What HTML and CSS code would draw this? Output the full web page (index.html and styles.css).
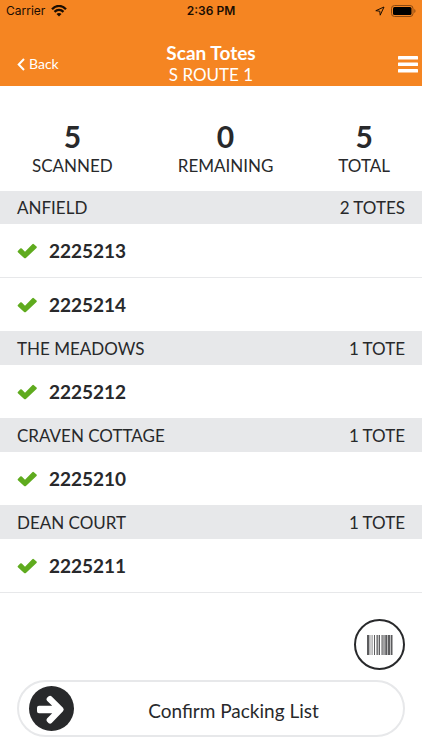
FILE: index.html
```html
<!DOCTYPE html>
<html lang="en">
<head>
<meta charset="utf-8">
<meta name="viewport" content="width=device-width, initial-scale=1">
<title>Scan Totes</title>
<link rel="stylesheet" href="styles.css">
</head>
<body>
<header class="top">
  <div class="status">
    <div class="status-side">
      <span>Carrier</span>
      <svg width="16" height="12" viewBox="0 0 16 12" fill="none" stroke="#1a0d02" stroke-width="2.200" aria-hidden="true"><path d="M1 4.200C5-.2 11-.2 15 4.200M3.500 6.900c2.600-2.600 6.400-2.600 9 0"/><path d="M8 11.500 5.500 9c1.400-1.300 3.600-1.300 5 0z" fill="#1a0d02" stroke="none"/></svg>
    </div>
    <span class="clock">2:36 PM</span>
    <div class="status-side status-right">
      <svg width="10" height="10" viewBox="0 0 10 10" fill="none" stroke="#1a0d02" stroke-linejoin="round" aria-hidden="true"><path d="M9 1 .8 4.700 4.800 5.200 5.200 9.200z"/></svg>
      <svg width="25" height="12" viewBox="0 0 25 12" aria-hidden="true"><rect x=".5" y=".5" width="21.500" height="11" rx="3" fill="none" stroke="#8d4a12"/><rect x="2" y="2" width="18.500" height="8" rx="1.500"/><path d="M23.300 4c1.600.7 1.600 3.300 0 4z" fill="#8d4a12"/></svg>
    </div>
  </div>
  <nav class="nav">
    <a class="back" href="#"><svg width="8" height="13" viewBox="0 0 8 13" fill="none" stroke="#fff" stroke-width="2" aria-hidden="true"><path d="M7 1 1.700 6.500 7 12"/></svg>Back</a>
    <div class="heading">
      <h1>Scan Totes</h1>
      <p>S ROUTE 1</p>
    </div>
    <button class="menu" type="button" aria-label="Menu"><svg width="20" height="17" viewBox="0 0 20 17" fill="#fff" aria-hidden="true"><rect width="20" height="3.500" rx=".6"/><rect y="6.500" width="20" height="3.500" rx=".6"/><rect y="13" width="20" height="3.500" rx=".6"/></svg></button>
  </nav>
</header>
<main>
  <dl class="stats">
    <div><dd>5</dd><dt>SCANNED</dt></div>
    <div><dd>0</dd><dt>REMAINING</dt></div>
    <div><dd>5</dd><dt>TOTAL</dt></div>
  </dl>
  <svg class="defs" width="0" height="0" aria-hidden="true"><symbol id="check" viewBox="0 0 20 16"><path d="M.9 7.900 3.200 5.600Q4 4.900 4.800 5.600L8 8.800 15.300 1.200Q16.100.5 16.900 1.200L19.500 3.600Q20.200 4.300 19.500 5L8.900 15Q8 15.700 7.100 15L.9 9.300Q.3 8.600.9 7.900Z" fill="#5fab1e"/></symbol></svg>
  <section class="group">
    <h2><span>ANFIELD</span><span>2 TOTES</span></h2>
    <ul>
      <li><svg class="check"><use href="#check"/></svg>2225213</li>
      <li><svg class="check"><use href="#check"/></svg>2225214</li>
    </ul>
  </section>
  <section class="group">
    <h2><span>THE MEADOWS</span><span>1 TOTE</span></h2>
    <ul><li><svg class="check"><use href="#check"/></svg>2225212</li></ul>
  </section>
  <section class="group">
    <h2><span>CRAVEN COTTAGE</span><span>1 TOTE</span></h2>
    <ul><li><svg class="check"><use href="#check"/></svg>2225210</li></ul>
  </section>
  <section class="group">
    <h2><span>DEAN COURT</span><span>1 TOTE</span></h2>
    <ul><li><svg class="check"><use href="#check"/></svg>2225211</li></ul>
  </section>
</main>
<footer class="actions">
  <button class="scan" type="button" aria-label="Scan barcode"><svg width="26" height="20" viewBox="0 0 26 20" aria-hidden="true"><g fill="#5c5c5e"><path d="M0 0h2v20H0zM7 0h1v20H7zM9.500 0h1.300v20H9.500zM12 0h1v20h-1zM14.500 0h1.200v20h-1.200zM16.500 0h1v20h-1zM18.200 0h2v20h-2zM21 0h2v20h-2zM24 0h1.500v20H24z"/></g><g fill="#98989a"><path d="M2 0h.7v20H2zM3.500 0h1v20h-1zM5.300 0h.7v20h-.7zM11 0h.6v20H11zM15.700 0h.8v20h-.8zM17.500 0h.7v20h-.7zM20.200 0h.5v20h-.5zM23 0h.6v20H23z"/></g></svg></button>
  <button class="confirm" type="button">
    <svg width="45" height="45" viewBox="0 0 45 45" aria-hidden="true"><circle cx="22.500" cy="22.500" r="22.500" fill="#28292b"/><path d="M10 19.800H23.200L18 14.800Q16.800 13.300 18 11.800L19.700 10.200Q21.200 9.200 22.700 10.400L34 21.800Q35.500 23.500 34 25.200L22.700 37Q21.200 38.200 19.700 37.200L18 35.500Q16.800 34 18 32.500L23.200 27.300H10Q8 27.300 8 25.300V21.800Q8 19.800 10 19.800Z" fill="#fff"/></svg>
    <span>Confirm Packing List</span>
  </button>
</footer>
</body>
</html>
```
FILE: styles.css
```css
* {
  box-sizing: border-box;
}

body {
  margin: 0;
  min-height: 100vh;
  display: flex;
  flex-direction: column;
  background: #fff;
  color: #28292b;
  font-family: Lato, "Liberation Sans", sans-serif;
}

h1, h2, p, dl, dd, ul {
  margin: 0;
  padding: 0;
}

button {
  font: inherit;
  color: inherit;
  background: none;
  border: 0;
  padding: 0;
}

svg {
  display: block;
  flex: none;
}

.top {
  background: #f58522;
}

.status {
  display: grid;
  grid-template-columns: 1fr auto 1fr;
  align-items: center;
  height: 22px;
  padding: 0 6px;
  color: #1a0d02;
  font: 12px/16px Inter, sans-serif;
}

.status-side {
  display: flex;
  align-items: center;
  gap: 6px;
}

.status-right {
  justify-content: flex-end;
}

.clock {
  font-weight: 600;
}

.nav {
  display: grid;
  grid-template-columns: 1fr auto 1fr;
  align-items: center;
  height: 64px;
  padding: 20px 4px 0;
  color: #fff;
}

.back {
  display: flex;
  align-items: center;
  gap: 4px;
  padding-left: 13px;
  color: inherit;
  font-size: 14px;
  line-height: 20px;
  text-decoration: none;
}

.heading {
  text-align: center;
}

.heading h1 {
  font-size: 19px;
  line-height: 22px;
}

.heading p {
  font-size: 17px;
  line-height: 22px;
}

.menu {
  justify-self: end;
}

.stats {
  display: flex;
  justify-content: space-between;
  padding: 32px 32px 14px;
  text-align: center;
}

.stats div {
  display: flex;
  flex-direction: column;
}

.stats dd {
  font-size: 30px;
  line-height: 36px;
  font-weight: 700;
}

.stats dt {
  font-size: 17px;
  line-height: 23px;
}

.defs {
  position: absolute;
}

.group + .group {
  border-top: 1px solid #e7e8ea;
}

.group h2 {
  display: flex;
  justify-content: space-between;
  padding: 0 17px;
  background: #e7e8ea;
  font-size: 17px;
  line-height: 33px;
  font-weight: 400;
}

.group ul {
  list-style: none;
}

.group li {
  display: flex;
  align-items: center;
  gap: 12px;
  height: 53px;
  padding: 0 17px;
  font-size: 19px;
  font-weight: 700;
}

.group li + li {
  height: 54px;
  border-top: 1px solid #e7e8ea;
}

.group:last-child {
  border-bottom: 1px solid #e7e8ea;
}

.check {
  width: 20px;
  height: 16px;
}

.actions {
  display: flex;
  flex-direction: column;
  gap: 10px;
  margin-top: auto;
  padding: 16px 17px 13px;
}

.scan {
  display: grid;
  place-items: center;
  align-self: flex-end;
  width: 51px;
  height: 51px;
  border: 2px solid #28292b;
  border-radius: 50%;
}

.confirm {
  display: flex;
  align-items: center;
  height: 57px;
  padding: 0 10px;
  border: 2px solid #e7e8ea;
  border-radius: 29px;
  font-size: 19px;
}

.confirm span {
  flex: 1;
  padding: 4px 0 0 0;
}
```
